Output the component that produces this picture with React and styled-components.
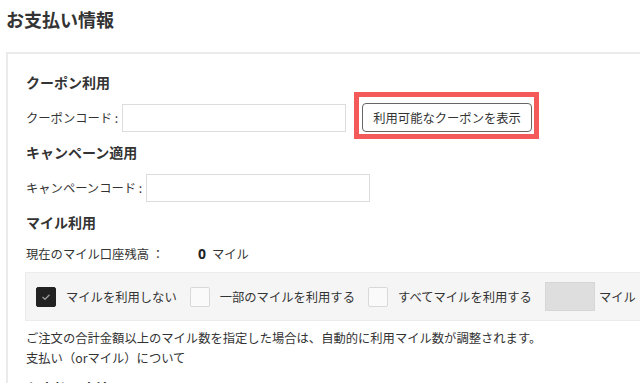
import React from "react";
import styled, { createGlobalStyle } from "styled-components";

const GlobalStyle = createGlobalStyle`
  html, body {
    margin: 0;
    padding: 0;
    background: #ffffff;
    overflow: hidden;
  }
  body {
    font-family: "Noto Sans CJK JP", "Noto Sans", sans-serif;
    color: #333333;
  }
  * { box-sizing: border-box; }
`;

const Page = styled.div`
  width: 640px;
  height: 383px;
  padding: 6px 0 0 6px;
  overflow: hidden;
`;

const Title = styled.h1`
  margin: 0;
  font-size: 18px;
  line-height: 26px;
  font-weight: 700;
  color: #333;
`;

const Panel = styled.section`
  margin-top: 20px;
  width: 720px;
  border: 2px solid #ebebeb;
  border-right: none;
  padding: 18px 0 0 17px;
`;

const SectionHeading = styled.h2`
  margin: ${(p) => p.$top || 0}px 0 0 1px;
  font-size: 14px;
  line-height: 20px;
  font-weight: 700;
  color: #333;
`;

const CodeRow = styled.div`
  display: flex;
  align-items: center;
  padding: ${(p) => p.$pad};
  margin-left: 1px;
`;

const Label = styled.label`
  font-size: 12.3px;
  line-height: 20px;
  color: #333;
  margin-right: 4px;
  white-space: nowrap;
`;

const TextInput = styled.input`
  width: 224px;
  height: 28px;
  border: 1px solid #dcdcdc;
  background: #fff;
  padding: 0 6px;
  font: inherit;
  outline: none;
`;

const Highlight = styled.span`
  position: relative;
  display: inline-flex;
  margin-left: 16px;
  &::after {
    content: "";
    position: absolute;
    top: -11px;
    left: -8px;
    right: -7px;
    bottom: -7px;
    border: 5px solid #f45a5a;
    pointer-events: none;
  }
`;

const Button = styled.button`
  height: 29px;
  padding: 0 10px;
  border: 1px solid #666;
  border-radius: 4px;
  background: #fff;
  font-family: "Noto Sans CJK JP", sans-serif;
  font-size: 12.3px;
  color: #333;
  white-space: nowrap;
  cursor: pointer;
`;

const BalanceRow = styled.div`
  display: flex;
  align-items: center;
  padding-top: 12px;
  margin-left: 1px;
  line-height: 20px;
`;

const BalanceLabel = styled.span`
  width: 172px;
  font-size: 12.3px;
  color: #333;
`;

const BalanceValue = styled.span`
  font-family: "Noto Sans", sans-serif;
  font-size: 14px;
  font-weight: 700;
  color: #222;
`;

const Unit = styled.span`
  font-size: 12.3px;
  color: #333;
  margin-left: ${(p) => p.$gap}px;
`;

const OptionBar = styled.div`
  display: flex;
  align-items: center;
  height: 49px;
  margin-top: 8px;
  padding-left: 10px;
  background: #f5f5f5;
  border: 1px solid #ececec;
  border-right: none;
`;

const Option = styled.label`
  display: flex;
  align-items: center;
  gap: 10px;
  margin-right: 13px;
  font-size: 12.3px;
  color: #333;
  white-space: nowrap;
`;

const Box = styled.span`
  width: 20px;
  height: 20px;
  border-radius: 2px;
  display: inline-flex;
  align-items: center;
  justify-content: center;
  background: ${(p) => (p.$checked ? "#222222" : "#fafafa")};
  border: 1px solid ${(p) => (p.$checked ? "#222222" : "#d9d9d9")};
`;

const MileInput = styled.input`
  width: 50px;
  height: 29px;
  background: #dedede;
  border: 1px solid #d6d6d6;
  padding: 0 4px;
  font: inherit;
  outline: none;
`;

const Note = styled.p`
  margin: 7px 0 0 1px;
  font-size: 12.3px;
  line-height: 20px;
  color: #333;
`;

const Check = () => (
  <svg width="10" height="8" viewBox="0 0 10 8">
    <polyline points="1.5,4 4,6.3 8.5,1.8" fill="none" stroke="#9a9a9a" strokeWidth="1.3" />
  </svg>
);

export default function App() {
  return (
    <>
      <GlobalStyle />
      <Page>
        <Title>お支払い情報</Title>
        <Panel>
          <SectionHeading>クーポン利用</SectionHeading>
          <CodeRow $pad="11px 0 10px">
            <Label>クーポンコード :</Label>
            <TextInput type="text" />
            <Highlight>
              <Button type="button">利用可能なクーポンを表示</Button>
            </Highlight>
          </CodeRow>
          <SectionHeading>キャンペーン適用</SectionHeading>
          <CodeRow $pad="12px 0 10px">
            <Label>キャンペーンコード :</Label>
            <TextInput type="text" />
          </CodeRow>
          <SectionHeading>マイル利用</SectionHeading>
          <BalanceRow>
            <BalanceLabel>現在のマイル口座残高 ：</BalanceLabel>
            <BalanceValue>0</BalanceValue>
            <Unit $gap={6}>マイル</Unit>
          </BalanceRow>
          <OptionBar>
            <Option>
              <Box $checked>
                <Check />
              </Box>
              マイルを利用しない
            </Option>
            <Option>
              <Box />
              一部のマイルを利用する
            </Option>
            <Option>
              <Box />
              すべてマイルを利用する
            </Option>
            <MileInput type="text" />
            <Unit $gap={4}>マイル</Unit>
          </OptionBar>
          <Note>
            ご注文の合計金額以上のマイル数を指定した場合は、自動的に利用マイル数が調整されます。
            <br />
            支払い（orマイル）について
          </Note>
          <SectionHeading $top={10}>お支払い方法</SectionHeading>
        </Panel>
      </Page>
    </>
  );
}
